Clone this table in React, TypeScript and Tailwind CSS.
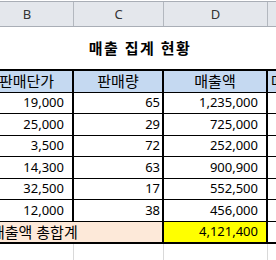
import React from 'react';

// 매출 집계 시트 일부 (B~E열)
const rows = [
  { price: '19,000', qty: 65, amount: '1,235,000', h: 'h-[21px]' },
  { price: '25,000', qty: 29, amount: '725,000', h: 'h-[22px]' },
  { price: '3,500', qty: 72, amount: '252,000', h: 'h-[21px]' },
  { price: '14,300', qty: 63, amount: '900,900', h: 'h-[22px]' },
  { price: '32,500', qty: 17, amount: '552,500', h: 'h-[21px]' },
  { price: '12,000', qty: 38, amount: '456,000', h: 'h-[22px]' },
];

const font = "font-['Noto_Sans','Noto_Sans_CJK_KR',sans-serif]";

export default function App() {
  return (
    <div className={`w-[276px] h-[260px] overflow-hidden bg-white text-black ${font}`}>
      {/* 열 머리글 */}
      <div className="mt-[1px] flex h-[26px] ml-[-19px] w-[320px] border-y border-[#a9aeb6] bg-[#e4e7ec] text-[13px] text-[#333]">
        <div className="flex w-[93px] shrink-0 items-center justify-center border-r border-[#b3b8bf] pt-[1px]">B</div>
        <div className="flex w-[90px] shrink-0 items-center justify-center border-r border-[#b3b8bf] pt-[1px]">C</div>
        <div className="flex w-[104px] shrink-0 items-center justify-center border-r border-[#b3b8bf] pt-[1px]">D</div>
        <div className="min-w-0 flex-1" />
      </div>

      {/* 제목 */}
      <div className="flex h-[42px] items-center justify-center pl-[4px]">
        <span className="text-[15px] font-bold tracking-[1.5px]">매출 집계 현황</span>
      </div>

      {/* 표 */}
      <div className="ml-[-19px] w-[320px]">
        <div className="flex h-[24px] border-t-2 border-b border-black bg-[#c5d9f1] text-[15px]">
          <div className="flex w-[93px] shrink-0 items-center justify-center border-r-2 border-black">판매단가</div>
          <div className="flex w-[90px] shrink-0 items-center justify-center border-r-2 border-black">판매량</div>
          <div className="flex w-[104px] shrink-0 items-center justify-center border-r-2 border-black">매출액</div>
          <div className="flex min-w-0 flex-1 items-center overflow-hidden pl-[3px] whitespace-nowrap">매출비율</div>
        </div>

        {rows.map((r, i) => (
          <div key={i} className={`flex ${r.h} border-b border-black text-[13px]`}>
            <div className="flex w-[93px] shrink-0 items-center justify-end border-r-2 border-black pr-[8px]">{r.price}</div>
            <div className="flex w-[90px] shrink-0 items-center justify-end border-r-2 border-black pr-[2px]">{r.qty}</div>
            <div className="flex w-[104px] shrink-0 items-center justify-end border-r-2 border-black pr-[8px]">{r.amount}</div>
            <div className="min-w-0 flex-1" />
          </div>
        ))}

        <div className="flex h-[22px] border-b-2 border-black">
          <div className="flex w-[183px] shrink-0 items-center border-r-2 border-black bg-[#fde9d9] pl-[10px] text-[15px] whitespace-nowrap">
            매출액 총합계
          </div>
          <div className="flex w-[104px] shrink-0 items-center justify-end border-r-2 border-black bg-[#ffff00] pr-[8px] text-[13px]">
            4,121,400
          </div>
          <div className="min-w-0 flex-1" />
        </div>

        {/* 빈 행 눈금선 */}
        <div className="flex h-[30px]">
          <div className="w-[93px] shrink-0 border-r border-[#d9d9d9]" />
          <div className="w-[90px] shrink-0 border-r border-[#d9d9d9]" />
          <div className="w-[104px] shrink-0 border-r border-[#d9d9d9]" />
          <div className="min-w-0 flex-1" />
        </div>
      </div>
    </div>
  );
}
